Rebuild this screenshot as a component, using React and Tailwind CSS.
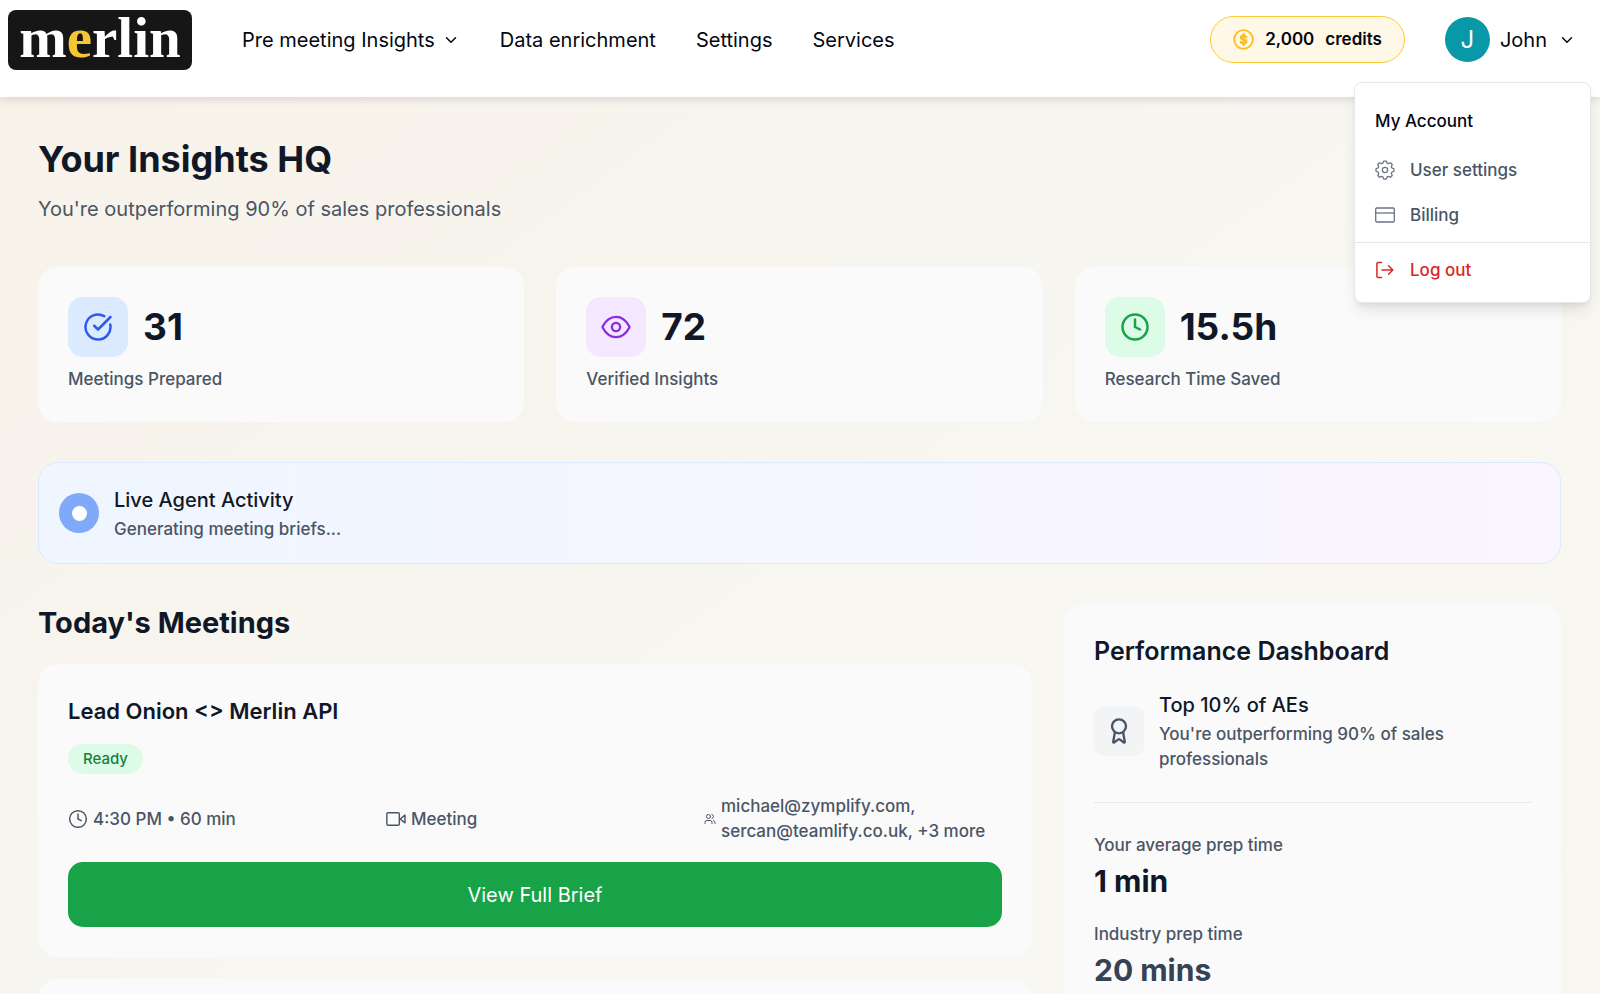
import React from 'react';
import { Award, ChevronDown, CircleCheckBig, Clock, Users } from 'lucide-react';

const CoinIcon = () => (
    <svg viewBox="0 0 24 24" className="w-[21px] h-[21px] text-[#fbbf24]" fill="none" stroke="currentColor" strokeLinecap="round">
        <circle cx="12" cy="12" r="10.7" strokeWidth="2.2" />
        <path d="M15 9.4c-.4-1.3-1.5-1.9-3-1.9-1.8 0-3 .8-3 2.2 0 3.1 6.2 1.5 6.2 4.6 0 1.4-1.3 2.3-3.2 2.3-1.6 0-2.8-.7-3.2-2M12 5.8v12.4" strokeWidth="2.6" />
    </svg>
);

const EyeIcon = ({ className }) => (
    <svg viewBox="0 0 24 24" className={className} fill="none" stroke="currentColor" strokeWidth="1.9" strokeLinejoin="round">
        <path d="M1.4 12.6a1.3 1.3 0 0 1 0-1.2C4 6.6 7.700 3.900 12 3.900s8 2.700 10.600 7.500a1.300 1.300 0 0 1 0 1.200C20 17.400 16.300 20.100 12 20.100s-8-2.700-10.600-7.500z" />
        <circle cx="12" cy="12" r="3.3" />
    </svg>
);

const GearIcon = () => (
    <svg viewBox="0 0 24 24" className="w-5 h-5" fill="none" stroke="currentColor" strokeWidth="1.5" strokeLinejoin="round">
        <path d="M9.4 3.8 10.5 1.2h3l1.1 2.6 1.4.6 2.6-1.1 2.1 2.1L19.600 8l.6 1.400 2.600 1.100v3l-2.600 1.100-.6 1.400 1.100 2.600-2.100 2.100-2.600-1.100-1.400.6-1.100 2.600h-3l-1.100-2.600-1.400-.6-2.600 1.100-2.100-2.100L4.400 16l-.6-1.400-2.600-1.100v-3l2.600-1.100L4.400 8 3.300 5.400l2.100-2.100L8 4.400z" />
        <circle cx="12" cy="12" r="3.2" />
    </svg>
);

const CardIcon = () => (
    <svg viewBox="0 0 20 20" className="w-5 h-5" fill="none" stroke="currentColor" strokeWidth="1.3">
        <rect x="0.7" y="3" width="18.6" height="14" rx="1.2" />
        <path d="M0.7 8h18.6" />
    </svg>
);

const LogOutIcon = () => (
    <svg viewBox="0 0 20 20" className="w-5 h-5" fill="none" stroke="currentColor" strokeWidth="1.5" strokeLinecap="round" strokeLinejoin="round">
        <path d="M6.5 2.5H3.2A1.3 1.3 0 0 0 1.9 3.8v12.4a1.3 1.3 0 0 0 1.3 1.3h3.3" />
        <path d="M7 10h10.600M13.600 5.800 17.800 10l-4.200 4.200" />
    </svg>
);

const VideoIcon = () => (
    <svg viewBox="0 0 24 24" className="w-5 h-5" fill="none" stroke="currentColor" strokeWidth="1.7" strokeLinejoin="round">
        <rect x="1" y="4.5" width="15" height="15" rx="1.5" />
        <path d="m17 12 5.8-4.6v9.2z" />
    </svg>
);

const stats = [
    { value: '31', label: 'Meetings Prepared', icon: CircleCheckBig, tile: 'bg-[#dbeafe] text-[#2b5be8]' },
    { value: '72', label: 'Verified Insights', icon: EyeIcon, tile: 'bg-[#f3e8ff] text-[#8a2fdd]' },
    { value: '15.5h', label: 'Research Time Saved', icon: Clock, tile: 'bg-[#dcfce7] text-[#16a34a]' },
];

const Header = () => (
    <header className="relative z-10 flex items-start justify-between bg-white pl-2 pr-6 pt-[10px] h-[97px] shadow-[0_3px_8px_rgba(0,0,0,0.12)]">
        <div className="flex items-center">
            <a href="#" className="flex items-center justify-center w-[184px] h-[60px] pb-1 rounded-lg bg-[#161616] font-['Liberation_Serif',serif] font-bold text-[57px] leading-[56px] text-white">
                <span>m<span className="text-[#f4c534]">e</span>rlin</span>
            </a>
            <nav className="flex items-center gap-10 ml-[50px] text-[20px] leading-7">
                <button className="flex items-center gap-[7px]">
                    Pre meeting Insights
                    <ChevronDown className="w-[18px] h-[18px]" />
                </button>
                <a href="#">Data enrichment</a>
                <a href="#">Settings</a>
                <a href="#">Services</a>
            </nav>
        </div>

        <div className="relative flex items-center gap-10 h-[59px]">
            <button className="flex items-center gap-[11px] h-[47px] px-[22px] rounded-full border border-[#fcc93a] bg-[#fff8e6] text-[17px] font-semibold">
                <CoinIcon />
                <span>2,000</span>
                <span>credits</span>
            </button>
            <button className="flex items-center text-[20px]">
                <span className="flex items-center justify-center w-[45px] h-[45px] rounded-full bg-[#0898a8] text-white text-[24px]">J</span>
                <span className="ml-[10px] mr-[11px]">John</span>
                <ChevronDown className="w-[18px] h-[18px]" />
            </button>

            <AccountMenu />
        </div>
    </header>
);

const AccountMenu = () => (
    <div className="absolute top-[72px] -right-[15px] w-[237px] rounded-lg border border-gray-200 bg-white pt-4 pb-[10px] text-[17px] leading-6 font-medium text-gray-600 shadow-lg">
        <p className="px-5 py-[10px] text-gray-950">My Account</p>
        <a href="#" className="flex items-center gap-[15px] px-5 h-[45px] mt-1">
            <span className="text-gray-500"><GearIcon /></span>
            User settings
        </a>
        <a href="#" className="flex items-center gap-[15px] px-5 h-[45px]">
            <span className="text-gray-500"><CardIcon /></span>
            Billing
        </a>
        <div className="border-t border-gray-200 mt-[5px] pt-1">
            <button className="flex items-center gap-[15px] px-5 h-[45px] w-full text-[#dc2626]">
                <LogOutIcon />
                Log out
            </button>
        </div>
    </div>
);

const StatCard = ({ stat }) => {
    const Icon = stat.icon;
    return (
        <div className="rounded-[20px] bg-[#fafafa] p-[30px]">
            <div className="flex items-center gap-[15px]">
                <div className={`flex items-center justify-center w-[60px] h-[60px] rounded-[15px] ${stat.tile}`}>
                    <Icon className="w-[30px] h-[30px]" />
                </div>
                <span className="text-[37px] leading-[44px] font-bold text-gray-900">{stat.value}</span>
            </div>
            <p className="mt-[10px] text-[17px] leading-[25px] font-medium text-gray-600">{stat.label}</p>
        </div>
    );
};

const MeetingCard = () => (
    <article className="rounded-[20px] bg-[#fafafa] p-[30px]">
        <h3 className="text-[22px] leading-[34px] font-semibold text-gray-900">Lead Onion &lt;&gt; Merlin API</h3>
        <span className="inline-flex items-center h-[30px] px-[15px] mt-4 rounded-full bg-[#dcfce7] text-[15px] font-medium text-[#15803d]">Ready</span>
        <div className="grid grid-cols-3 gap-5 items-center mt-5 text-[17px] leading-[25px] font-medium text-gray-600">
            <div className="flex items-center gap-[5px]">
                <Clock className="w-5 h-5" strokeWidth={1.75} />
                4:30 PM • 60 min
            </div>
            <div className="flex items-center gap-[5px]">
                <VideoIcon />
                Meeting
            </div>
            <div className="flex items-center gap-[5px]">
                <Users className="w-3 h-3 shrink-0" />
                <span>michael@zymplify.com, sercan@teamlify.co.uk, +3 more</span>
            </div>
        </div>
        <button className="w-full h-[65px] mt-[18px] rounded-[15px] bg-[#18a349] text-[20px] text-white">View Full Brief</button>
    </article>
);

const PerformanceDashboard = () => (
    <aside className="rounded-[20px] bg-[#fafafa] p-[30px]">
        <h2 className="text-[25px] leading-[34px] font-semibold text-gray-900">Performance Dashboard</h2>
        <div className="flex items-center gap-[15px] mt-[22px] pb-[30px] border-b border-gray-200">
            <div className="flex items-center justify-center shrink-0 w-[50px] h-[50px] rounded-[10px] bg-gray-100 text-gray-600">
                <Award className="w-7 h-7" />
            </div>
            <div>
                <p className="text-[20px] leading-[30px] font-medium text-gray-900">Top 10% of AEs</p>
                <p className="mt-[2px] text-[17px] leading-[25px] font-medium text-gray-600">You're outperforming 90% of sales professionals</p>
            </div>
        </div>
        <div className="mt-[30px] text-[17px] leading-[25px] font-medium text-gray-600">
            <p>Your average prep time</p>
            <p className="mt-1 text-[30px] leading-[38px] font-bold text-gray-900">1 min</p>
            <p className="mt-[22px]">Industry prep time</p>
            <p className="mt-1 text-[30px] leading-[38px] font-bold text-gray-700">20 mins</p>
        </div>
    </aside>
);

export default function App() {
    return (
        <div className="min-h-screen bg-linear-to-br from-[#f8f2e9] via-[#f7f6f1] to-[#f8f7f2] font-['Inter',sans-serif] text-gray-950">
            <Header />

            <main className="pl-[38px] pr-[39px] pt-10 pb-10">
                <h1 className="text-[36px] leading-[44px] font-bold text-gray-900">Your Insights HQ</h1>
                <p className="mt-[14px] text-[20px] leading-7 text-gray-600">You're outperforming 90% of sales professionals</p>

                {/* Stats */}
                <section className="grid grid-cols-3 gap-8 mt-11">
                    {stats.map((stat) => (
                        <StatCard key={stat.label} stat={stat} />
                    ))}
                </section>

                {/* Live activity */}
                <section className="flex items-center gap-[15px] mt-10 px-5 py-5 rounded-[20px] border border-[#dbeafe] bg-linear-to-r from-[#eff6ff] to-[#faf5ff]">
                    <span className="flex items-center justify-center w-10 h-10 rounded-full bg-[#80a9f9]">
                        <span className="w-[15px] h-[15px] rounded-full bg-white"></span>
                    </span>
                    <div>
                        <p className="pt-[2px] text-[20px] leading-[30px] font-medium text-gray-900">Live Agent Activity</p>
                        <p className="text-[17px] leading-[28px] font-medium text-gray-600">Generating meeting briefs...</p>
                    </div>
                </section>

                <div className="grid grid-cols-[2fr_1fr] gap-8 mt-10">
                    <section>
                        <h2 className="text-[29px] leading-[38px] font-bold text-gray-900">Today's Meetings</h2>
                        <div className="flex flex-col gap-[22px] mt-[22px]">
                            <MeetingCard />
                            {/* next meeting, still loading */}
                            <div className="h-40 rounded-[20px] bg-[#fafafa]"></div>
                        </div>
                    </section>
                    <PerformanceDashboard />
                </div>
            </main>
        </div>
    );
}
